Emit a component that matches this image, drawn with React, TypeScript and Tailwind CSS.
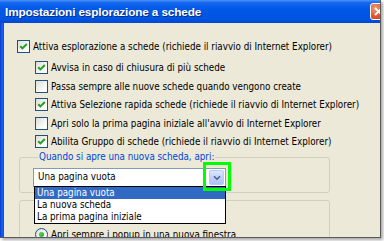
import React from 'react';

const SUB_OPTIONS = [
    { label: 'Avvisa in caso di chiusura di più schede', checked: true },
    { label: 'Passa sempre alle nuove schede quando vengono create', checked: false },
    { label: 'Attiva Selezione rapida schede (richiede il riavvio di Internet Explorer)', checked: true },
    { label: "Apri solo la prima pagina iniziale all'avvio di Internet Explorer", checked: false },
    { label: 'Abilita Gruppo di schede (richiede il riavvio di Internet Explorer)', checked: true },
];

const LIST_ITEMS = ['Una pagina vuota', 'La nuova scheda', 'La prima pagina iniziale'];

function XpCheck({ checked }: { checked: boolean }) {
    return (
        <span className="flex h-[13px] w-[13px] shrink-0 items-center justify-center border border-[#1C5180] bg-[linear-gradient(135deg,#DCDCD7,#FFFFFF_80%)]">
            {checked && (
                <svg width="11" height="11" viewBox="0 0 11 11">
                    <path d="M2.2 5.2 L4.4 7.4 L8.8 3" fill="none" stroke="#21A121" strokeWidth="2" />
                </svg>
            )}
        </span>
    );
}

function XpRadio({ checked }: { checked: boolean }) {
    return (
        <span className="flex h-[13px] w-[13px] shrink-0 items-center justify-center rounded-full border border-[#1C5180] bg-[linear-gradient(135deg,#DCDCD7,#FFFFFF_80%)]">
            {checked && <span className="h-[5px] w-[5px] rounded-full bg-[radial-gradient(circle_at_35%_35%,#55D155,#21A121)]" />}
        </span>
    );
}

export default function App() {
    return (
        <div className="h-[241px] w-[384px] bg-white font-['DejaVu_Sans_Condensed','Liberation_Sans',sans-serif] text-[9.75px] text-black">
            <div className="flex h-[238px] w-[381px] flex-col overflow-hidden border-b border-r border-[#5a5a5a] shadow-[2px_2px_3px_rgba(0,0,0,0.35)]">
                {/* title bar */}
                <div className="flex h-[23px] shrink-0 items-start bg-[linear-gradient(to_bottom,#4A94F8_0%,#1466EE_12%,#0058E6_40%,#0055E2_80%,#0048D4_100%)]">
                    <span className="mt-[5px] shrink-0 pl-[5px] font-['Liberation_Sans',sans-serif] text-[11.8px] font-bold leading-[14px] tracking-[-0.15px] text-white [text-shadow:1px_1px_0_#0A2C8C]">
                        Impostazioni esplorazione a schede
                    </span>
                    {/* close button, cut by the screenshot edge */}
                    <span className="ml-auto mt-[3px] h-[17px] w-[10px] shrink-0 overflow-hidden">
                        <span className="flex h-[17px] w-[17px] items-center justify-center rounded-[3px] border border-white bg-[radial-gradient(circle_at_30%_30%,#F29A78,#E0532E_55%,#C4401C)]">
                            <svg width="9" height="9" viewBox="0 0 9 9">
                                <path d="M1 1 L8 8 M8 1 L1 8" stroke="white" strokeWidth="1.8" />
                            </svg>
                        </span>
                    </span>
                </div>

                {/* body */}
                <div className="flex flex-1">
                    <div className="w-[4px] shrink-0 bg-[linear-gradient(to_right,#0936C8,#1862F2_50%,#0B4FE0)]" />
                    <div className="flex flex-1 flex-col bg-[#ECE9D8] pl-[13px] pt-[17px]">
                        <label className="flex h-[13px] items-center gap-[3px] leading-[13px]">
                            <XpCheck checked />
                            <span>Attiva esplorazione a schede (richiede il riavvio di Internet Explorer)</span>
                        </label>

                        <div className="mt-[8px] flex flex-col gap-[5.5px] pl-[18px]">
                            {SUB_OPTIONS.map(opt => (
                                <label key={opt.label} className="flex h-[13px] items-center gap-[3px] leading-[13px]">
                                    <XpCheck checked={opt.checked} />
                                    <span>{opt.label}</span>
                                </label>
                            ))}
                        </div>

                        <fieldset className="ml-[2px] mt-[3px] w-[311px] rounded-[3px] border border-[#D0D0BF] pb-[5px] pl-[13px]">
                            <legend className="ml-[5px] px-[1px] leading-[12px] text-[#0046D5]">
                                Quando si apre una nuova scheda, apri:
                            </legend>
                            <div className="relative mt-[5px] flex h-[19px] w-[193px] items-center border border-[#7F9DB9] bg-white">
                                <span className="pl-[4px]">Una pagina vuota</span>
                                <span className="ml-auto mr-[1px] flex h-[15px] w-[15px] items-center justify-center rounded-[2px] border border-[#B7C9F3] bg-[linear-gradient(to_bottom,#DCE6FD,#BCCEF8_60%,#AEC3F6)]">
                                    <svg width="8" height="6" viewBox="0 0 8 6">
                                        <path d="M1 1.2 L4 4.2 L7 1.2" fill="none" stroke="#4D6185" strokeWidth="1.6" />
                                    </svg>
                                </span>

                                {/* open list */}
                                <div className="absolute left-[0px] top-[17px] z-10 w-[192px] border border-black bg-white">
                                    {LIST_ITEMS.map((item, i) => (
                                        <div
                                            key={item}
                                            className={`h-[12px] pl-[2px] leading-[12px] ${i === 0 ? 'bg-[#316AC5] text-white' : ''}`}
                                        >
                                            {item}
                                        </div>
                                    ))}
                                </div>

                                {/* highlight */}
                                <div className="pointer-events-none absolute left-[169px] top-[-7px] z-20 h-[29px] w-[28px] border-[3px] border-[#00FF00]" />
                            </div>
                        </fieldset>

                        <fieldset className="ml-[2px] mt-[1px] h-[60px] w-[311px] shrink-0 rounded-[3px] border border-[#D0D0BF] pl-[15px]">
                            <legend className="ml-[5px] px-[1px] leading-[12px] text-[#0046D5]">In caso di popup:</legend>
                            <label className="mt-[22px] flex h-[13px] items-center gap-[3px] leading-[13px]">
                                <XpRadio checked />
                                <span>Apri sempre i popup in una nuova finestra</span>
                            </label>
                        </fieldset>
                    </div>
                </div>
            </div>
        </div>
    );
}
